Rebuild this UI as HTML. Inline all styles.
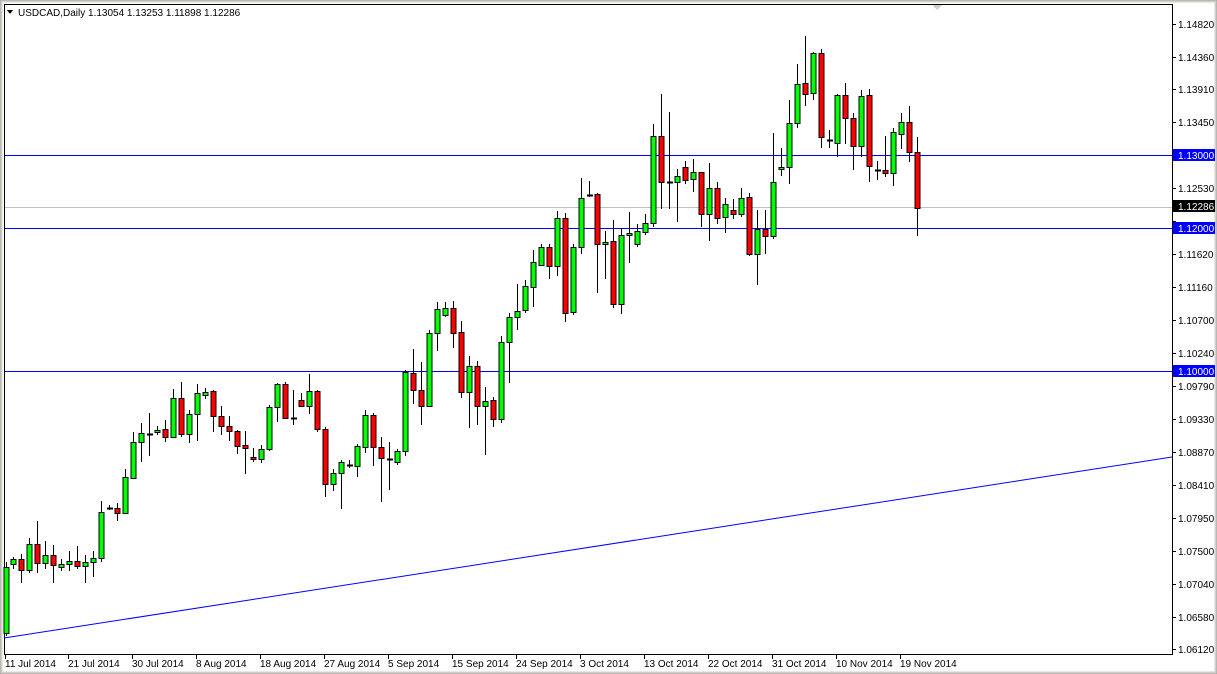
<!DOCTYPE html>
<html><head><meta charset="utf-8"><style>
html,body{margin:0;padding:0;background:#fff;}
body{width:1217px;height:674px;overflow:hidden;position:relative;}
svg{position:absolute;left:0;top:0;}
text{font-family:"Liberation Sans",sans-serif;font-size:10px;fill:#000;}
</style></head><body>
<svg id="c" width="1217" height="674" xmlns="http://www.w3.org/2000/svg" shape-rendering="crispEdges">
<rect x="0" y="0" width="1217" height="674" fill="#fff"/>
<rect x="0.5" y="0.5" width="1216" height="673" fill="none" stroke="#a0a0a0"/>
<rect x="1.5" y="1.5" width="1214" height="671" fill="none" stroke="#d4d0c8" stroke-width="2"/>
<rect x="4.5" y="4.5" width="1168" height="650" fill="#fff" stroke="#000"/>
<polygon points="932,5 942,5 937,10" fill="#d0d0d0"/>
<rect x="5" y="155" width="1167" height="1" fill="#0000ff"/>
<rect x="5" y="228" width="1167" height="1" fill="#0000ff"/>
<rect x="5" y="371" width="1167" height="1" fill="#0000ff"/>
<rect x="5" y="207" width="1167" height="1" fill="#c0c0c0"/>
<line x1="4" y1="638" x2="1172" y2="457" stroke="#0000ff" shape-rendering="auto"/>
<g id="candles"></g>
<polygon points="7,10 13,10 10,14" fill="#000"/>
<text x="18" y="16">USDCAD,Daily  1.13054 1.13253 1.11898 1.12286</text>
<g id="rt"></g>
<rect x="1173" y="149" width="42" height="12" fill="#0000ff"/>
<text x="1178" y="159" style="fill:#fff">1.13000</text>
<rect x="1173" y="200" width="42" height="12" fill="#000"/>
<text x="1178" y="210" style="fill:#fff">1.12286</text>
<rect x="1173" y="222" width="42" height="12" fill="#0000ff"/>
<text x="1178" y="232" style="fill:#fff">1.12000</text>
<rect x="1173" y="365" width="42" height="12" fill="#0000ff"/>
<text x="1178" y="375" style="fill:#fff">1.10000</text>
<g>
<text x="5" y="667">11 Jul 2014</text>
<text x="68" y="667">21 Jul 2014</text>
<text x="132" y="667">30 Jul 2014</text>
<text x="196" y="667">8 Aug 2014</text>
<text x="260" y="667">18 Aug 2014</text>
<text x="324" y="667">27 Aug 2014</text>
<text x="388" y="667">5 Sep 2014</text>
<text x="452" y="667">15 Sep 2014</text>
<text x="516" y="667">24 Sep 2014</text>
<text x="580" y="667">3 Oct 2014</text>
<text x="644" y="667">13 Oct 2014</text>
<text x="708" y="667">22 Oct 2014</text>
<text x="772" y="667">31 Oct 2014</text>
<text x="836" y="667">10 Nov 2014</text>
<text x="900" y="667">19 Nov 2014</text>
</g>
<g id="bt"></g>
<g>
<text x="1178" y="28">1.14820</text><text x="1178" y="61">1.14360</text><text x="1178" y="93">1.13910</text><text x="1178" y="126">1.13450</text>
<text x="1178" y="192">1.12530</text><text x="1178" y="258">1.11620</text><text x="1178" y="291">1.11160</text><text x="1178" y="324">1.10700</text>
<text x="1178" y="357">1.10240</text><text x="1178" y="390">1.09790</text><text x="1178" y="423">1.09330</text><text x="1178" y="456">1.08870</text>
<text x="1178" y="489">1.08410</text><text x="1178" y="522">1.07950</text><text x="1178" y="555">1.07500</text><text x="1178" y="588">1.07040</text>
<text x="1178" y="621">1.06580</text><text x="1178" y="653">1.06120</text>
</g>
</svg>
<script>
var d=[
[6,562,636,567,633,'g'],[13,557,569,559,564,'g'],[21,554,583,559,570,'r'],[29,538,573,544,570,'g'],[37,521,573,544,563,'r'],
[45,541,569,555,563,'g'],[53,545,583,555,565,'r'],[61,559,571,564,567,'g'],[69,551,571,561,564,'g'],[77,546,569,561,566,'r'],
[85,555,583,562,566,'g'],[93,551,577,558,562,'g'],[101,501,562,512,558,'g'],[109,505,510,508,508,'d'],[117,503,521,508,513,'r'],
[125,469,514,477,513,'g'],[133,432,479,442,478,'g'],[141,423,462,433,442,'g'],[149,413,456,434,434,'d'],[157,426,435,430,432,'g'],
[165,420,442,429,437,'r'],[173,389,438,398,437,'g'],[181,382,437,398,434,'r'],[189,410,443,414,434,'g'],[197,384,441,393,414,'g'],
[205,388,399,392,395,'g'],[213,390,432,391,416,'r'],[221,406,435,416,426,'r'],[229,416,441,426,431,'r'],[237,430,454,431,446,'r'],
[245,431,474,445,448,'r'],[253,448,462,457,459,'r'],[261,445,463,449,459,'g'],[269,405,451,407,449,'g'],[277,383,422,384,407,'g'],
[285,382,419,384,418,'r'],[293,390,425,418,418,'d'],[301,393,407,400,406,'r'],[309,374,414,391,406,'g'],[317,390,432,391,429,'r'],
[325,427,497,429,484,'r'],[333,469,491,473,484,'g'],[341,460,509,462,473,'g'],[349,460,468,465,465,'d'],[357,444,477,446,466,'g'],
[365,410,453,415,447,'g'],[373,413,466,415,447,'r'],[381,437,502,447,458,'r'],[389,442,490,459,459,'d'],[397,449,465,451,462,'g'],
[405,370,456,372,451,'g'],[413,349,404,373,390,'r'],[421,362,425,390,406,'r'],[429,330,407,333,406,'g'],[437,302,351,309,333,'g'],
[445,302,317,308,315,'g'],[453,301,348,308,333,'r'],[461,321,398,332,392,'r'],[469,356,428,366,392,'g'],[477,361,425,366,406,'r'],
[485,387,455,401,406,'g'],[493,397,427,400,419,'r'],[501,336,423,342,419,'g'],[509,313,383,317,342,'g'],[517,284,330,311,317,'g'],
[525,280,313,286,310,'g'],[533,250,307,262,287,'g'],[541,244,266,247,265,'g'],[549,244,279,247,266,'r'],[557,211,276,218,266,'g'],
[565,213,322,218,313,'r'],[573,244,315,247,312,'g'],[581,178,254,198,247,'g'],[589,181,197,195,195,'d'],[597,193,293,194,244,'r'],
[605,231,279,242,244,'g'],[613,220,308,241,304,'r'],[621,228,314,235,304,'g'],[629,212,263,233,235,'g'],[637,224,247,231,244,'g'],
[645,214,235,223,232,'g'],[653,124,227,136,223,'g'],[661,94,209,136,182,'r'],[669,112,209,182,182,'d'],[677,169,222,176,182,'g'],
[685,161,184,167,180,'r'],[693,159,192,172,179,'g'],[701,172,227,172,214,'r'],[709,163,241,188,214,'g'],[717,182,224,188,218,'r'],
[725,198,233,204,217,'g'],[733,199,219,210,214,'r'],[741,188,217,198,214,'g'],[749,193,256,197,254,'r'],[757,210,285,229,254,'g'],
[765,210,254,229,236,'r'],[773,133,239,182,236,'g'],[781,148,176,167,169,'g'],[789,100,184,123,167,'g'],[797,64,128,84,123,'g'],
[805,36,106,83,94,'r'],[813,52,100,53,93,'g'],[821,49,148,53,137,'r'],[829,130,148,140,140,'d'],[837,94,157,95,143,'g'],
[845,83,144,95,118,'r'],[853,113,170,118,146,'r'],[861,90,157,96,146,'g'],[869,89,182,95,166,'r'],[877,161,180,170,170,'d'],
[885,136,177,170,173,'r'],[893,128,186,132,173,'g'],[901,113,149,122,134,'g'],[909,106,162,122,152,'r'],[917,137,236,152,208,'r']];
var ns="http://www.w3.org/2000/svg",g=document.getElementById('candles');
function el(t,a){var e=document.createElementNS(ns,t);for(var k in a)e.setAttribute(k,a[k]);g.appendChild(e);}
d.forEach(function(c){
 var x=c[0];
 el('line',{x1:x+0.5,y1:c[1],x2:x+0.5,y2:c[2],stroke:'#000'});
 if(c[5]=='d'){el('line',{x1:x-2,y1:c[3]+0.5,x2:x+4,y2:c[3]+0.5,stroke:'#000',"stroke-width":2});}
 else{var h=Math.max(c[4]-c[3],2);el('rect',{x:x-2,y:c[3]+0.5,width:5,height:h,fill:c[5]=='g'?'#00ff00':'#ff0000',stroke:'#000'});}
});
var bt=document.getElementById('bt');
[5,68,132,196,260,324,388,452,516,580,644,708,772,836,900].forEach(function(x){var e=document.createElementNS(ns,'line');e.setAttribute('x1',x+0.5);e.setAttribute('x2',x+0.5);e.setAttribute('y1',654);e.setAttribute('y2',659);e.setAttribute('stroke','#000');bt.appendChild(e);});
var rt=document.getElementById('rt');
[24,57,89,122,155,188,221,228,254,287,320,353,371,386,419,452,485,518,551,584,617,649].forEach(function(y){var e=document.createElementNS(ns,'line');e.setAttribute('x1',1172);e.setAttribute('x2',1176);e.setAttribute('y1',y+0.5);e.setAttribute('y2',y+0.5);e.setAttribute('stroke','#000');rt.appendChild(e);});
</script>
</body></html>
